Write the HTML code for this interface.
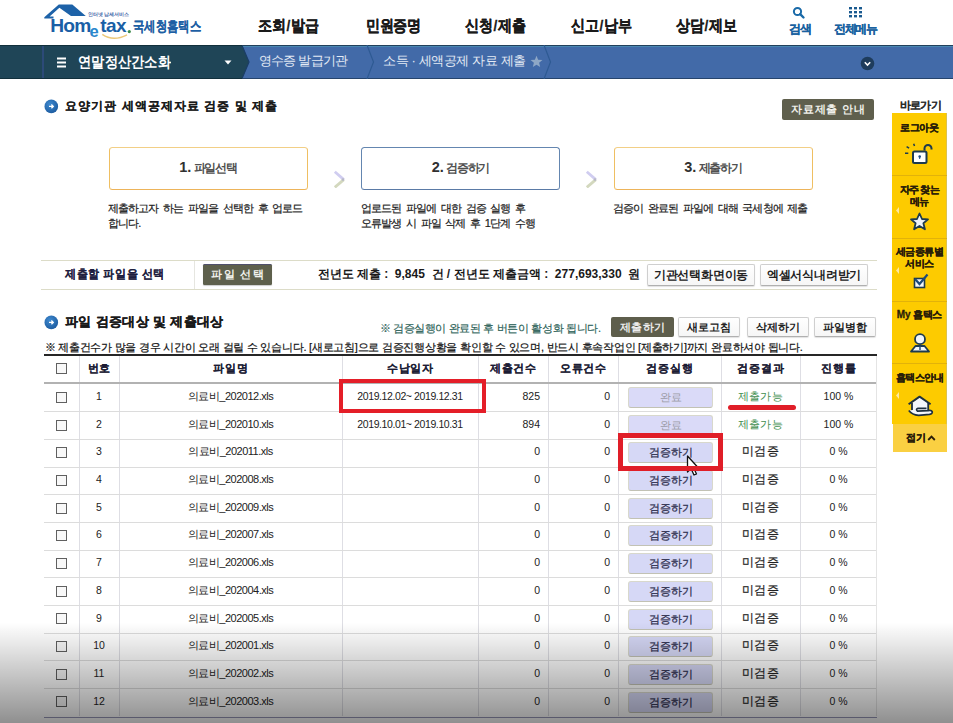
<!DOCTYPE html>
<html><head><meta charset="utf-8">
<style>
*{margin:0;padding:0;box-sizing:border-box}
html,body{width:953px;height:723px;overflow:hidden;background:#fff}
body{position:relative;font-family:"Liberation Sans",sans-serif;color:#222}
.a{position:absolute;white-space:nowrap}
.menu{top:15.5px;font-size:15.5px;font-weight:bold;color:#1a1a1a;letter-spacing:0px;line-height:19px;-webkit-text-stroke:0.3px #1a1a1a;transform:scaleX(0.88);transform-origin:0 0}
.nav{top:45px;height:34px}
.step{top:147px;height:43px;width:199px;border:1.7px solid #efbf62;border-top-color:#f2cf86;border-bottom-color:#edb45a;border-radius:3.5px;text-align:center;line-height:39px;font-size:12px;font-weight:bold;color:#505050;letter-spacing:-1.2px}
.step b{font-size:14.5px;color:#303030;letter-spacing:0}
.desc{font-size:11px;color:#1a1a1a;line-height:15px;letter-spacing:-0.9px;word-spacing:2.4px;-webkit-text-stroke:0.2px #1a1a1a}
.sb{left:892px;width:55px;text-align:center;font-size:10px;font-weight:bold;color:#2a1e08;line-height:13px;letter-spacing:-0.2px;-webkit-text-stroke:0.3px #2a1e08}
.btn{height:22px;border:1px solid #cfcfcf;border-bottom-color:#b0b0b0;border-radius:2px;background:linear-gradient(#fff,#f6f6f6);box-shadow:0 1px 1px rgba(0,0,0,0.12);font-size:11.5px;font-weight:bold;color:#222;text-align:center;line-height:20px;letter-spacing:-0.2px}
.btn2{top:317px;width:62px;height:20px;border:1px solid #cfcfcf;border-bottom-color:#b0b0b0;border-radius:2px;background:linear-gradient(#fff,#f6f6f6);box-shadow:0 1px 1px rgba(0,0,0,0.12);font-size:11px;font-weight:bold;color:#222;text-align:center;line-height:18px;letter-spacing:0.3px;text-indent:0.3px}
.th{text-align:center;font-size:10.5px;font-weight:bold;color:#1c1c34;line-height:16px;letter-spacing:0.7px;text-indent:0.7px;-webkit-text-stroke:0.1px #1c1c34}
.td{text-align:center;font-size:10.5px;color:#222;line-height:14px}
.fn{font-size:11px;letter-spacing:-0.5px}
.dt{letter-spacing:-0.4px}
.ok{color:#3f8e4e;font-size:11px;letter-spacing:0.1px}
.mg{font-size:11.5px;letter-spacing:0.5px;-webkit-text-stroke:0.2px #222}
.bt{left:628px;width:85px;height:21px;border:1px solid #d8d8cc;border-bottom-color:#c2c2b4;border-radius:3px;background:#d6d8f6;font-size:11px;color:#2c2c4c;text-align:center;line-height:19px;-webkit-text-stroke:0.25px #2c2c4c;letter-spacing:0px}
.done{color:#9a9aa6;background:#dadaf8;-webkit-text-stroke:0}
</style></head><body>

<!-- HEADER -->
<svg class="a" style="left:0;top:0" width="135" height="44" viewBox="0 0 135 44">
  <path d="M44.3 17.3 L58.8 4.4 L72.3 4.4 L85.8 16 L71 16 L59.4 7.8 L49.6 16.6 L53.5 16.6 L53.5 18.6 L44.3 18.6 Z" fill="#1d62a8"/>
  <text x="50.3" y="31.8" font-family="Liberation Sans" font-weight="bold" font-size="19.2" fill="#1a5fa6" letter-spacing="-0.8">Hom</text>
  <text x="89.6" y="36.9" font-family="Liberation Sans" font-weight="bold" font-size="16.5" fill="#2a86cc">e</text>
  <text x="100.2" y="31.9" font-family="Liberation Sans" font-weight="bold" font-size="19" fill="#1a5fa6" letter-spacing="-0.5">tax</text>
  <circle cx="129.3" cy="31.6" r="1.6" fill="#3a8a4a"/>
  <path d="M102.3 34.3 Q113 42 127 34.8" stroke="#ecc878" stroke-width="1.5" fill="none"/>
  <text x="88" y="16" font-family="Liberation Sans" font-weight="bold" font-size="4.7" fill="#3a62a6" letter-spacing="0">인터넷 납세서비스</text>
</svg>
<div class="a" style="left:133px;top:17.5px;font-size:13.5px;font-weight:bold;color:#1d5fa4;letter-spacing:0px;line-height:17px;-webkit-text-stroke:0.15px #1d5fa4;transform:scaleX(0.81);transform-origin:0 0">국세청홈택스</div>

<div class="a menu" style="left:258px">조회<span style="margin:0 0.8px 0 0.3px">/</span>발급</div>
<div class="a menu" style="left:365.5px;letter-spacing:-0.4px">민원증명</div>
<div class="a menu" style="left:465px">신청<span style="margin:0 0.8px 0 0.3px">/</span>제출</div>
<div class="a menu" style="left:571px">신고<span style="margin:0 0.8px 0 0.3px">/</span>납부</div>
<div class="a menu" style="left:676px">상담<span style="margin:0 0.8px 0 0.3px">/</span>제보</div>

<svg class="a" style="left:792px;top:6px" width="14" height="14" viewBox="0 0 14 14">
  <circle cx="5.5" cy="5.5" r="3.6" stroke="#1a6aa8" stroke-width="2" fill="none"/>
  <path d="M8.2 8.2 L11.5 11.5" stroke="#1a6aa8" stroke-width="2.4" stroke-linecap="round"/>
</svg>
<div class="a" style="left:789px;top:22px;font-size:12px;font-weight:bold;color:#1a62a0;letter-spacing:-0.6px;line-height:14px;-webkit-text-stroke:0.2px #1a62a0">검색</div>
<svg class="a" style="left:849px;top:7px" width="13" height="11" viewBox="0 0 13 11">
  <g fill="#1a5a90">
  <rect x="0" y="0" width="3" height="2.4"/><rect x="5" y="0" width="3" height="2.4"/><rect x="10" y="0" width="3" height="2.4"/>
  <rect x="0" y="4" width="3" height="2.4"/><rect x="5" y="4" width="3" height="2.4"/><rect x="10" y="4" width="3" height="2.4"/>
  <rect x="0" y="8" width="3" height="2.4"/><rect x="5" y="8" width="3" height="2.4"/><rect x="10" y="8" width="3" height="2.4"/>
  </g>
</svg>
<div class="a" style="left:834px;top:22px;font-size:12px;font-weight:bold;color:#1a62a0;letter-spacing:-1.4px;line-height:14px;-webkit-text-stroke:0.2px #1a62a0">전체메뉴</div>

<!-- NAV -->
<div class="a nav" style="left:0;width:953px;background:#426aa8;border-top:1px solid #22405c;border-bottom:1px solid #26446c;box-shadow:inset 0 1px 0 #4a88b2"></div>
<svg class="a" style="left:0;top:45px" width="260" height="34" viewBox="0 0 260 34">
  <path d="M0 0 H242 L249 17 L242 34 H0 Z" fill="#1f4557"/><path d="M242 0.5 L249 17 L242 33.5" stroke="#1b3d66" stroke-width="1.2" fill="none"/>
  <path d="M0 0.5 H242" stroke="#12303c" stroke-width="1"/>
  <path d="M0 33.5 H242" stroke="#12303c" stroke-width="1"/>
  <rect x="42" y="1" width="2" height="32" fill="#2c4a78"/>
  <rect x="57" y="12.5" width="9" height="2" fill="#fff"/>
  <rect x="57" y="16.5" width="9" height="2" fill="#fff"/>
  <rect x="57" y="20.5" width="9" height="2" fill="#fff"/>
  <path d="M224.5 15.5 H231.5 L228 19.5 Z" fill="#fff"/>
</svg>
<div class="a" style="left:77.5px;top:51.5px;font-size:15px;font-weight:bold;color:#fff;letter-spacing:0px;line-height:19px;transform:scaleX(0.885);transform-origin:0 0">연말정산간소화</div>
<svg class="a" style="left:360px;top:45px" width="20" height="34"><path d="M7 0 L13.5 17 L7 34" stroke="#2e5a93" stroke-width="1.2" fill="none"/></svg>
<div class="a" style="left:259px;top:53px;font-size:13px;color:#e4ebf5;letter-spacing:-0.8px;line-height:16px">영수증 발급기관</div>
<div class="a" style="left:383px;top:53px;font-size:13px;color:#e4ebf5;letter-spacing:-0.4px;line-height:16px">소득 · 세액공제 자료 제출</div>
<svg class="a" style="left:530px;top:55px" width="13" height="13" viewBox="0 0 24 24"><path d="M12 1.5 L15 8.8 L23 9.3 L16.8 14.4 L18.8 22.3 L12 18 L5.2 22.3 L7.2 14.4 L1 9.3 L9 8.8 Z" fill="#8ea7c6"/></svg>
<svg class="a" style="left:538px;top:45px" width="20" height="34"><path d="M6 0 L12.5 17 L6 34" stroke="#2e5a93" stroke-width="1.2" fill="none"/></svg>
<svg class="a" style="left:860px;top:56px" width="15" height="15" viewBox="0 0 15 15"><circle cx="7.5" cy="7.5" r="6.8" fill="#1e3c5c"/><path d="M4.8 6.3 L7.5 9 L10.2 6.3" stroke="#fff" stroke-width="1.6" fill="none"/></svg>


<!-- SECTION 1 -->
<svg class="a" style="left:44px;top:99px" width="15" height="15" viewBox="0 0 15 15"><defs><radialGradient id="g1" cx="0.4" cy="0.35" r="0.7"><stop offset="0" stop-color="#3f8ad0"/><stop offset="1" stop-color="#1c5a9e"/></radialGradient></defs><circle cx="7.3" cy="7.4" r="6.8" fill="url(#g1)"/><path d="M5 7.4 H9.2 M7.4 5.5 L9.3 7.4 L7.4 9.3" stroke="#fff" stroke-width="1.3" fill="none"/></svg>
<div class="a" style="left:65px;top:99px;font-size:12px;font-weight:bold;color:#1a1a1a;letter-spacing:1.05px;line-height:15px;-webkit-text-stroke:0.1px #1a1a1a">요양기관 세액공제자료 검증 및 제출</div>
<div class="a" style="left:782px;top:99px;width:92px;height:21px;background:#5f5f4d;border-radius:2px;color:#f0f0ea;font-size:11px;font-weight:bold;text-align:center;line-height:21px;letter-spacing:0.9px;text-indent:0.9px">자료제출 안내</div>

<div class="a step" style="left:108.5px"><b>1.</b> 파일선택</div>
<div class="a step" style="left:361px;border-color:#6486b0;border-bottom-color:#5a7aa6"><b>2.</b> 검증하기</div>
<div class="a step" style="left:613.5px"><b>3.</b> 제출하기</div>
<svg class="a" style="left:333px;top:170px" width="13" height="18" viewBox="0 0 13 18"><path d="M1.8 1.8 L10.8 9.6" stroke="#d0cdf0" stroke-width="2.8"/><path d="M10.8 9.6 L1.8 17.4" stroke="#d3d8be" stroke-width="2.8"/><circle cx="10" cy="9.6" r="1.3" fill="#b8b8c8"/></svg>
<svg class="a" style="left:585px;top:170px" width="13" height="18" viewBox="0 0 13 18"><path d="M1.8 1.8 L10.8 9.6" stroke="#d0cdf0" stroke-width="2.8"/><path d="M10.8 9.6 L1.8 17.4" stroke="#d3d8be" stroke-width="2.8"/><circle cx="10" cy="9.6" r="1.3" fill="#b8b8c8"/></svg>
<div class="a desc" style="left:108px;top:201px">제출하고자 하는 파일을 선택한 후 업로드<br>합니다.</div>
<div class="a desc" style="left:361px;top:201px">업로드된 파일에 대한 검증 실행 후<br>오류발생 시 파일 삭제 후 1단계 수행</div>
<div class="a desc" style="left:613px;top:201px">검증이 완료된 파일에 대해 국세청에 제출</div>

<!-- SIDEBAR -->
<div class="a" style="left:900px;top:98px;font-size:11px;font-weight:bold;color:#2a2a2a;letter-spacing:-0.8px;line-height:14px;-webkit-text-stroke:0.05px #2a2a2a">바로가기</div>
<div class="a" style="left:892px;top:113px;width:55px;height:311px;background:#fdcb00;box-shadow:inset -1px 0 0 #dcc24e"></div>
<div class="a" style="left:893px;top:424px;width:54px;height:28px;background:#fad042"></div>

<div class="a" style="left:892px;top:175px;width:55px;height:1px;background:#e2b20a"></div>
<div class="a" style="left:892px;top:238px;width:55px;height:1px;background:#e2b20a"></div>
<div class="a" style="left:892px;top:301px;width:55px;height:1px;background:#e2b20a"></div>
<div class="a" style="left:892px;top:363px;width:55px;height:1px;background:#e2b20a"></div>
<div class="a sb" style="top:121px">로그아웃</div>
<div class="a sb" style="top:183px;letter-spacing:-0.9px">자주 찾는</div>
<div class="a sb" style="top:195px;letter-spacing:-0.8px">메뉴</div>
<div class="a sb" style="top:245px;letter-spacing:-0.6px">세금종류별</div>
<div class="a sb" style="top:257px">서비스</div>
<div class="a sb" style="top:308px">My 홈택스</div>
<div class="a sb" style="top:371px;letter-spacing:-0.6px">홈택스안내</div>
<div class="a sb" style="top:431px;width:auto;left:906px">접기</div><svg class="a" style="left:927px;top:435px" width="9" height="6" viewBox="0 0 9 6"><path d="M1.2 5 L4.5 1.6 L7.8 5" stroke="#2a1e08" stroke-width="1.8" fill="none"/></svg>
<svg class="a" style="left:895px;top:204px" width="5" height="80"><path d="M4 3 L1 6.5 L4 10 Z" fill="#fde9a0"/><path d="M4 63 L1 66.5 L4 70 Z" fill="#fde9a0"/></svg>
<svg class="a" style="left:895px;top:389px" width="5" height="14"><path d="M4 3 L1 6.5 L4 10 Z" fill="#fde9a0"/></svg>
<!-- lock -->
<svg class="a" style="left:903px;top:142px" width="32" height="24" viewBox="0 0 32 24">
  <rect x="10" y="9.5" width="13.5" height="11.5" rx="1.5" fill="#fff" stroke="#1d3a4e" stroke-width="2"/>
  <circle cx="16.7" cy="14.5" r="1.3" fill="#1d4a80"/><path d="M16.7 14.5 V17" stroke="#1d4a80" stroke-width="1"/>
  <path d="M21.5 8.5 V6.5 A3.5 3.5 0 0 1 28.5 6.5 V7.5" stroke="#1d3a4e" stroke-width="2" fill="none"/>
  <path d="M3.6 4.6 L6.1 6.2 M10.7 1.7 L11.5 4.1 M2 11.2 H5.3" stroke="#1d3a4e" stroke-width="1.5"/>
</svg>
<!-- star -->
<svg class="a" style="left:909px;top:212px" width="21" height="19" viewBox="0 0 21 19">
  <path d="M10.5 1.5 L13 7 L19 7.4 L14.4 11.3 L15.9 17.3 L10.5 14 L5.1 17.3 L6.6 11.3 L2 7.4 L8 7 Z" fill="#eef3fa" stroke="#1d3a4e" stroke-width="1.8" stroke-linejoin="round"/>
</svg>
<!-- check -->
<svg class="a" style="left:912px;top:273px" width="18" height="17" viewBox="0 0 18 17">
  <rect x="2.5" y="5.5" width="10" height="9" fill="#f4f7fb" stroke="#1d3a4e" stroke-width="1.6"/>
  <path d="M3 6 L7.5 11 L15.5 1.5" stroke="#1d4a7a" stroke-width="2.2" fill="none"/>
</svg>
<!-- person -->
<svg class="a" style="left:909px;top:333px" width="22" height="20" viewBox="0 0 22 20">
  <path d="M2 18.5 L6.5 13 H15.5 L20 18.5 Z" fill="#f2f6fb" stroke="#1d3a4e" stroke-width="1.8" stroke-linejoin="round"/>
  <circle cx="11" cy="6.2" r="5" fill="#f2f6fb" stroke="#1d3a4e" stroke-width="1.8"/>
  <path d="M11 13 V17" stroke="#1d4a7a" stroke-width="1.4"/>
</svg>
<!-- house -->
<svg class="a" style="left:902px;top:390px" width="36" height="30" viewBox="0 0 36 30">
  <path d="M10 13 L17.6 7.2 L26.2 13 V24 H10 Z" fill="#f3f7fc"/>
  <path d="M6.6 14.3 L17.6 6.6 L28.6 14.3" stroke="#1d3040" stroke-width="1.9" fill="none" stroke-linejoin="round"/>
  <path d="M10 13 V21 M26.2 13 V23" stroke="#1d3040" stroke-width="1.8"/>
  <path d="M6.8 20.5 Q10 24.8 16.6 25.4 L27.5 24.4 Q30.8 23.6 30.2 21.6 Q29.4 19.8 26 20.6 L15.5 21.2 Q13.4 19.2 16 18.3 L24.5 18.3" fill="#f3f7fc" stroke="#1d3040" stroke-width="1.7" stroke-linejoin="round"/>
</svg>

<!-- FILE ROW -->
<div class="a" style="left:41px;top:260px;width:836px;height:30px;border-top:1px solid #dcdcc8;border-bottom:1px solid #dcdcc8"></div>
<div class="a" style="left:194px;top:261px;width:1px;height:28px;background:#e6e6e0"></div>
<div class="a" style="left:65px;top:267px;font-size:12px;font-weight:bold;color:#1e1e40;letter-spacing:0.6px;line-height:14px;-webkit-text-stroke:0.05px #1e1e40;transform:scaleX(0.92);transform-origin:0 0">제출할 파일을 선택</div>
<div class="a" style="left:203px;top:264px;width:69px;height:21px;background:#5e604c;border-top:1.5px solid #50506c;border-radius:1.5px;box-shadow:0 1px 1px rgba(0,0,0,0.2);color:#f2f2ec;font-size:11px;font-weight:bold;text-align:center;line-height:19px;letter-spacing:1.3px;text-indent:1.3px">파일 선택</div>
<div class="a" style="left:317.5px;top:267px;font-size:12px;font-weight:bold;color:#1a1a1a;line-height:14px;letter-spacing:0px;-webkit-text-stroke:0px #1a1a1a">전년도 제출 :&nbsp; 9,845&nbsp; 건 / 전년도 제출금액 :&nbsp; 277,693,330&nbsp; 원</div>
<div class="a btn" style="left:647px;top:264px;width:108px">기관선택화면이동</div>
<div class="a btn" style="left:760px;top:264px;width:108px">엑셀서식내려받기</div>

<!-- SECTION 2 -->
<svg class="a" style="left:44px;top:315px" width="15" height="15" viewBox="0 0 15 15"><circle cx="7.3" cy="7.4" r="6.8" fill="url(#g1)"/><path d="M5 7.4 H9.2 M7.4 5.5 L9.3 7.4 L7.4 9.3" stroke="#fff" stroke-width="1.3" fill="none"/></svg>
<div class="a" style="left:65px;top:314px;font-size:13px;font-weight:bold;color:#1a1a1a;letter-spacing:0.35px;line-height:16px;-webkit-text-stroke:0.25px #1a1a1a">파일 검증대상 및 제출대상</div>
<div class="a" style="left:379.5px;top:321px;font-size:11px;color:#2a5e56;letter-spacing:-0.35px;line-height:14px;-webkit-text-stroke:0.15px #2a5e56">※ 검증실행이 완료된 후 버튼이 활성화 됩니다.</div>
<div class="a" style="left:611px;top:317px;width:63px;height:20px;background:#5e5e4c;border-radius:2px;color:#ececec;font-size:11px;font-weight:bold;text-align:center;line-height:20px;letter-spacing:0.3px;text-indent:0.3px">제출하기</div>
<div class="a btn2" style="left:678px">새로고침</div>
<div class="a btn2" style="left:747px">삭제하기</div>
<div class="a btn2" style="left:814px">파일병합</div>
<div class="a" style="left:44.5px;top:339.5px;font-size:11px;color:#111;line-height:14px;letter-spacing:-0.25px;-webkit-text-stroke:0.2px #111">※ 제출건수가 많을 경우 시간이 오래 걸릴 수 있습니다. [새로고침]으로 검증진행상황을 확인할 수 있으며, 반드시 후속작업인 [제출하기]까지 완료하셔야 됩니다.</div>











<!-- TABLE -->
<div class="a" style="left:44px;top:354px;width:833px;height:2px;background:#262626"></div>
<div class="a" style="left:79px;top:356px;width:1px;height:360px;background:#dedee4"></div>
<div class="a" style="left:119px;top:356px;width:1px;height:360px;background:#dedee4"></div>
<div class="a" style="left:342px;top:356px;width:1px;height:360px;background:#dedee4"></div>
<div class="a" style="left:478px;top:356px;width:1px;height:360px;background:#dedee4"></div>
<div class="a" style="left:548px;top:356px;width:1px;height:360px;background:#dedee4"></div>
<div class="a" style="left:618px;top:356px;width:1px;height:360px;background:#dedee4"></div>
<div class="a" style="left:721px;top:356px;width:1px;height:360px;background:#dedee4"></div>
<div class="a" style="left:800px;top:356px;width:1px;height:360px;background:#dedee4"></div>
<div class="a" style="left:44px;top:382px;width:833px;height:2px;background:#b2b2b2"></div>
<div class="a" style="left:44px;top:411px;width:833px;height:1px;background:#dcdcdc"></div>
<div class="a" style="left:44px;top:439px;width:833px;height:1px;background:#dcdcdc"></div>
<div class="a" style="left:44px;top:467px;width:833px;height:1px;background:#dcdcdc"></div>
<div class="a" style="left:44px;top:494px;width:833px;height:1px;background:#dcdcdc"></div>
<div class="a" style="left:44px;top:522px;width:833px;height:1px;background:#dcdcdc"></div>
<div class="a" style="left:44px;top:550px;width:833px;height:1px;background:#dcdcdc"></div>
<div class="a" style="left:44px;top:577px;width:833px;height:1px;background:#dcdcdc"></div>
<div class="a" style="left:44px;top:605px;width:833px;height:1px;background:#dcdcdc"></div>
<div class="a" style="left:44px;top:633px;width:833px;height:1px;background:#dcdcdc"></div>
<div class="a" style="left:44px;top:660px;width:833px;height:1px;background:#dcdcdc"></div>
<div class="a" style="left:44px;top:688px;width:833px;height:1px;background:#dcdcdc"></div>
<div class="a" style="left:44px;top:716.5px;width:833px;height:1.3px;background:#9898b8"></div>
<div class="a" style="left:876px;top:356px;width:1px;height:360px;background:#e4e4e4"></div>
<div class="a" style="left:56px;top:363.0px;width:11px;height:11px;border:1.4px solid #606060;background:#f8f8f8"></div>
<div class="a th" style="left:79px;width:40px;top:359.5px">번호</div>
<div class="a th" style="left:119px;width:223px;top:359.5px">파일명</div>
<div class="a th" style="left:342px;width:136px;top:359.5px">수납일자</div>
<div class="a th" style="left:478px;width:70px;top:359.5px">제출건수</div>
<div class="a th" style="left:548px;width:70px;top:359.5px">오류건수</div>
<div class="a th" style="left:618px;width:103px;top:359.5px">검증실행</div>
<div class="a th" style="left:721px;width:79px;top:359.5px">검증결과</div>
<div class="a th" style="left:800px;width:77px;top:359.5px">진행률</div>
<div class="a" style="left:56px;top:391.8px;width:11px;height:11px;border:1.4px solid #606060;background:#f8f8f8"></div>
<div class="a td" style="left:79px;width:40px;top:389.0px">1</div>
<div class="a td fn" style="left:119px;width:223px;top:389.0px">의료비_202012.xls</div>
<div class="a td dt" style="left:342px;width:136px;top:389.0px">2019.12.02~ 2019.12.31</div>
<div class="a td" style="left:478px;width:62px;text-align:right;top:389.0px">825</div>
<div class="a td" style="left:548px;width:62px;text-align:right;top:389.0px">0</div>
<div class="a bt done" style="top:387.0px">완료</div>
<div class="a td ok" style="left:721px;width:79px;top:389.0px">제출가능</div>
<div class="a td" style="left:800px;width:77px;top:389.0px">100 %</div>
<div class="a" style="left:56px;top:419.5px;width:11px;height:11px;border:1.4px solid #606060;background:#f8f8f8"></div>
<div class="a td" style="left:79px;width:40px;top:416.7px">2</div>
<div class="a td fn" style="left:119px;width:223px;top:416.7px">의료비_202010.xls</div>
<div class="a td dt" style="left:342px;width:136px;top:416.7px">2019.10.01~ 2019.10.31</div>
<div class="a td" style="left:478px;width:62px;text-align:right;top:416.7px">894</div>
<div class="a td" style="left:548px;width:62px;text-align:right;top:416.7px">0</div>
<div class="a bt done" style="top:414.7px">완료</div>
<div class="a td ok" style="left:721px;width:79px;top:416.7px">제출가능</div>
<div class="a td" style="left:800px;width:77px;top:416.7px">100 %</div>
<div class="a" style="left:56px;top:447.2px;width:11px;height:11px;border:1.4px solid #606060;background:#f8f8f8"></div>
<div class="a td" style="left:79px;width:40px;top:444.4px">3</div>
<div class="a td fn" style="left:119px;width:223px;top:444.4px">의료비_202011.xls</div>
<div class="a td" style="left:478px;width:62px;text-align:right;top:444.4px">0</div>
<div class="a td" style="left:548px;width:62px;text-align:right;top:444.4px">0</div>
<div class="a bt" style="top:442.4px">검증하기</div>
<div class="a td mg" style="left:721px;width:79px;top:444.4px">미검증</div>
<div class="a td" style="left:800px;width:77px;top:444.4px">0 %</div>
<div class="a" style="left:56px;top:474.9px;width:11px;height:11px;border:1.4px solid #606060;background:#f8f8f8"></div>
<div class="a td" style="left:79px;width:40px;top:472.1px">4</div>
<div class="a td fn" style="left:119px;width:223px;top:472.1px">의료비_202008.xls</div>
<div class="a td" style="left:478px;width:62px;text-align:right;top:472.1px">0</div>
<div class="a td" style="left:548px;width:62px;text-align:right;top:472.1px">0</div>
<div class="a bt" style="top:470.1px">검증하기</div>
<div class="a td mg" style="left:721px;width:79px;top:472.1px">미검증</div>
<div class="a td" style="left:800px;width:77px;top:472.1px">0 %</div>
<div class="a" style="left:56px;top:502.6px;width:11px;height:11px;border:1.4px solid #606060;background:#f8f8f8"></div>
<div class="a td" style="left:79px;width:40px;top:499.8px">5</div>
<div class="a td fn" style="left:119px;width:223px;top:499.8px">의료비_202009.xls</div>
<div class="a td" style="left:478px;width:62px;text-align:right;top:499.8px">0</div>
<div class="a td" style="left:548px;width:62px;text-align:right;top:499.8px">0</div>
<div class="a bt" style="top:497.8px">검증하기</div>
<div class="a td mg" style="left:721px;width:79px;top:499.8px">미검증</div>
<div class="a td" style="left:800px;width:77px;top:499.8px">0 %</div>
<div class="a" style="left:56px;top:530.2px;width:11px;height:11px;border:1.4px solid #606060;background:#f8f8f8"></div>
<div class="a td" style="left:79px;width:40px;top:527.4px">6</div>
<div class="a td fn" style="left:119px;width:223px;top:527.4px">의료비_202007.xls</div>
<div class="a td" style="left:478px;width:62px;text-align:right;top:527.4px">0</div>
<div class="a td" style="left:548px;width:62px;text-align:right;top:527.4px">0</div>
<div class="a bt" style="top:525.4px">검증하기</div>
<div class="a td mg" style="left:721px;width:79px;top:527.4px">미검증</div>
<div class="a td" style="left:800px;width:77px;top:527.4px">0 %</div>
<div class="a" style="left:56px;top:557.9px;width:11px;height:11px;border:1.4px solid #606060;background:#f8f8f8"></div>
<div class="a td" style="left:79px;width:40px;top:555.1px">7</div>
<div class="a td fn" style="left:119px;width:223px;top:555.1px">의료비_202006.xls</div>
<div class="a td" style="left:478px;width:62px;text-align:right;top:555.1px">0</div>
<div class="a td" style="left:548px;width:62px;text-align:right;top:555.1px">0</div>
<div class="a bt" style="top:553.1px">검증하기</div>
<div class="a td mg" style="left:721px;width:79px;top:555.1px">미검증</div>
<div class="a td" style="left:800px;width:77px;top:555.1px">0 %</div>
<div class="a" style="left:56px;top:585.6px;width:11px;height:11px;border:1.4px solid #606060;background:#f8f8f8"></div>
<div class="a td" style="left:79px;width:40px;top:582.8px">8</div>
<div class="a td fn" style="left:119px;width:223px;top:582.8px">의료비_202004.xls</div>
<div class="a td" style="left:478px;width:62px;text-align:right;top:582.8px">0</div>
<div class="a td" style="left:548px;width:62px;text-align:right;top:582.8px">0</div>
<div class="a bt" style="top:580.8px">검증하기</div>
<div class="a td mg" style="left:721px;width:79px;top:582.8px">미검증</div>
<div class="a td" style="left:800px;width:77px;top:582.8px">0 %</div>
<div class="a" style="left:56px;top:613.3px;width:11px;height:11px;border:1.4px solid #606060;background:#f8f8f8"></div>
<div class="a td" style="left:79px;width:40px;top:610.5px">9</div>
<div class="a td fn" style="left:119px;width:223px;top:610.5px">의료비_202005.xls</div>
<div class="a td" style="left:478px;width:62px;text-align:right;top:610.5px">0</div>
<div class="a td" style="left:548px;width:62px;text-align:right;top:610.5px">0</div>
<div class="a bt" style="top:608.5px">검증하기</div>
<div class="a td mg" style="left:721px;width:79px;top:610.5px">미검증</div>
<div class="a td" style="left:800px;width:77px;top:610.5px">0 %</div>
<div class="a" style="left:56px;top:641.0px;width:11px;height:11px;border:1.4px solid #606060;background:#f8f8f8"></div>
<div class="a td" style="left:79px;width:40px;top:638.2px">10</div>
<div class="a td fn" style="left:119px;width:223px;top:638.2px">의료비_202001.xls</div>
<div class="a td" style="left:478px;width:62px;text-align:right;top:638.2px">0</div>
<div class="a td" style="left:548px;width:62px;text-align:right;top:638.2px">0</div>
<div class="a bt" style="top:636.2px">검증하기</div>
<div class="a td mg" style="left:721px;width:79px;top:638.2px">미검증</div>
<div class="a td" style="left:800px;width:77px;top:638.2px">0 %</div>
<div class="a" style="left:56px;top:668.6px;width:11px;height:11px;border:1.4px solid #606060;background:#f8f8f8"></div>
<div class="a td" style="left:79px;width:40px;top:665.8px">11</div>
<div class="a td fn" style="left:119px;width:223px;top:665.8px">의료비_202002.xls</div>
<div class="a td" style="left:478px;width:62px;text-align:right;top:665.8px">0</div>
<div class="a td" style="left:548px;width:62px;text-align:right;top:665.8px">0</div>
<div class="a bt" style="top:663.8px">검증하기</div>
<div class="a td mg" style="left:721px;width:79px;top:665.8px">미검증</div>
<div class="a td" style="left:800px;width:77px;top:665.8px">0 %</div>
<div class="a" style="left:56px;top:696.3px;width:11px;height:11px;border:1.4px solid #606060;background:#f8f8f8"></div>
<div class="a td" style="left:79px;width:40px;top:693.5px">12</div>
<div class="a td fn" style="left:119px;width:223px;top:693.5px">의료비_202003.xls</div>
<div class="a td" style="left:478px;width:62px;text-align:right;top:693.5px">0</div>
<div class="a td" style="left:548px;width:62px;text-align:right;top:693.5px">0</div>
<div class="a bt" style="top:691.5px">검증하기</div>
<div class="a td mg" style="left:721px;width:79px;top:693.5px">미검증</div>
<div class="a td" style="left:800px;width:77px;top:693.5px">0 %</div>
<div class="a" style="left:339px;top:379px;width:147px;height:34px;border:4.8px solid #e41e28"></div>
<div class="a" style="left:728px;top:405px;width:68px;height:4.5px;border-radius:3px;background:#e01e28"></div>
<svg class="a" style="left:684.3px;top:454px" width="16" height="22" viewBox="0 0 16 22"><path d="M3.5 2 V18 L7 14.5 L10 21 L12.5 20 L9.5 13.5 L14 13.5 Z" fill="#fff" stroke="#111" stroke-width="1.3" stroke-linejoin="round"/></svg>
<div class="a" style="left:618px;top:433px;width:105px;height:38px;border:5px solid #e01e28"></div>
<div class="a" style="left:0;top:622px;width:953px;height:101px;background:linear-gradient(to bottom,rgba(0,0,0,0) 0%,rgba(0,0,0,0.02) 5%,rgba(0,0,0,0.09) 22%,rgba(0,0,0,0.44) 100%)"></div>
<!-- /TABLE -->
</body></html>
